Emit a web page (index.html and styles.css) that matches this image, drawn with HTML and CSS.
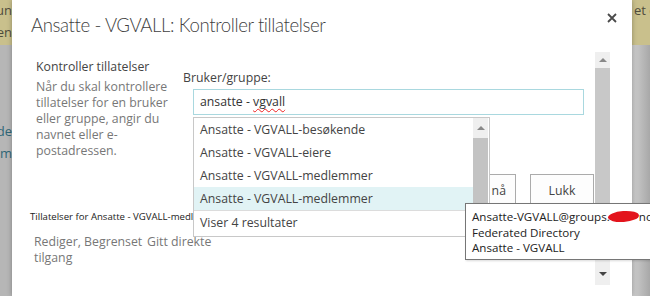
FILE: index.html
```html
<!DOCTYPE html>
<html lang="no">
<head>
    <meta charset="UTF-8">
    <meta name="viewport" content="width=device-width, initial-scale=1.0">
    <title>Ansatte - VGVALL: Kontroller tillatelser</title>
    <link rel="stylesheet" href="styles.css">
</head>
<body>
    <!-- page behind the dialog, dimmed -->
    <div class="backdrop backdrop-left">
        <div class="bg-line bg-first">Kommun</div>
        <div class="bg-line">Eieren</div>
        <div class="bg-line bg-link bg-gap">Medarbeide</div>
        <div class="bg-line bg-link">Komm</div>
    </div>

    <div class="dialog">
        <div class="dialog-header">
            <h1>Ansatte - VGVALL: Kontroller tillatelser</h1>
            <button class="close" type="button" title="Lukk">
                <svg width="10" height="10" viewBox="0 0 10 10">
                    <path d="M1 1 L9 9 M9 1 L1 9" stroke="#4a4a4a" stroke-width="1.8" fill="none"/>
                </svg>
            </button>
        </div>

        <div class="dialog-body">
            <div class="frame">
                <div class="check-row">
                    <div class="section-desc">
                        <h2>Kontroller tillatelser</h2>
                        <p>Når du skal kontrollere tillatelser for en bruker eller gruppe, angir du navnet eller e-postadressen.</p>
                    </div>
                    <div class="section-field">
                        <label for="picker">Bruker/gruppe:</label>
                        <div class="picker">
                            <div class="picker-input" id="picker">ansatte - <span class="misspelled">vgvall</span></div>
                            <div class="suggestions">
                                <div class="suggestion-body">
                                    <ul class="suggestion-list">
                                        <li>Ansatte - VGVALL-besøkende</li>
                                        <li>Ansatte - VGVALL-eiere</li>
                                        <li>Ansatte - VGVALL-medlemmer</li>
                                        <li class="active">Ansatte - VGVALL-medlemmer</li>
                                    </ul>
                                    <div class="mini-scroll">
                                        <div class="mini-up"><span class="arrow-up"></span></div>
                                        <div class="mini-thumb"></div>
                                    </div>
                                </div>
                                <div class="suggestion-footer">Viser 4 resultater</div>
                            </div>
                        </div>
                        <div class="actions">
                            <button type="button" class="btn">Kontroller nå</button>
                            <button type="button" class="btn btn-close">Lukk</button>
                        </div>
                    </div>
                </div>

                <div class="result-title">Tillatelser for Ansatte - VGVALL-medlemmer:</div>
                <table class="result-table">
                    <tr>
                        <td class="col-level">Rediger, Begrenset tilgang</td>
                        <td>Gitt direkte</td>
                    </tr>
                </table>
            </div>

            <div class="scrollbar">
                <div class="scroll-up"><span class="arrow-up"></span></div>
                <div class="scroll-thumb"></div>
                <div class="scroll-track"></div>
                <div class="scroll-down"><span class="arrow-down"></span></div>
            </div>
        </div>

        <div class="tooltip">
            <div>Ansatte-VGVALL@groups.<span class="redact"></span>no</div>
            <div>Federated Directory</div>
            <div>Ansatte - VGVALL</div>
        </div>
    </div>

    <div class="backdrop backdrop-right">
        <div class="bg-line bg-first">et c</div>
    </div>
</body>
</html>
```

FILE: styles.css
```css
* {
    box-sizing: border-box;
}
body {
    margin: 0;
    width: 650px;
    height: 296px;
    overflow: hidden;
    display: flex;
    font-family: "Open Sans", "Noto Sans", sans-serif;
    font-size: 12.3px;
    background: linear-gradient(#c9c08c 0, #c9c08c 45px, #b6b6b6 45px);
}

/* dimmed page behind */
.backdrop {
    display: flex;
    flex-direction: column;
    align-items: flex-end;
    overflow: hidden;
    flex: none;
    font-size: 13px;
    color: #4f4c3c;
}
.backdrop-left {
    width: 12px;
}
.backdrop-right {
    width: 18px;
    align-items: flex-start;
    padding-left: 2px;
    background:
        linear-gradient(#c9c08c, #c9c08c) top / 100% 45px no-repeat,
        linear-gradient(90deg, #cfcfcf, #a8a8a8);
}
.bg-line {
    height: 20px;
    line-height: 20px;
    margin-top: 2px;
    white-space: nowrap;
}
.bg-first {
    margin-top: 0;
}
.bg-link {
    color: #2f6676;
}
.bg-gap {
    margin-top: 79px;
}

/* dialog */
.dialog {
    position: relative;
    width: 620px;
    flex: none;
    background: #fff;
    color: #444;
    box-shadow: 0 0 5px rgba(0,0,0,0.3);
}
.dialog-header {
    height: 52px;
    display: flex;
    justify-content: space-between;
    padding: 10px 15px 0 19px;
}
.dialog-header h1 {
    margin: 0;
    font-family: "Lato", "Open Sans", sans-serif;
    font-size: 18.6px;
    font-weight: 300;
    line-height: 30px;
    letter-spacing: -0.4px;
    color: #3f3f3f;
}
.close {
    margin-top: 3px;
    width: 10px;
    height: 10px;
    padding: 0;
    border: none;
    background: none;
}
.close svg {
    display: block;
}

.dialog-body {
    display: flex;
    height: 233px;
    width: 580px;
    margin-left: 18px;
}
.frame {
    flex: 1;
}
.check-row {
    display: flex;
}
.section-desc {
    width: 153px;
    padding: 7px 0 0 6px;
}
.section-desc h2 {
    margin: 0 0 4px;
    font-size: 12.3px;
    font-weight: 400;
    line-height: 16px;
    color: #444;
}
.section-desc p {
    margin: 0;
    width: 132px;
    line-height: 16px;
    color: #777;
}
.section-field {
    flex: 1;
    padding: 18px 1px 0 0;
}
.section-field label {
    display: block;
    line-height: 16px;
    color: #444;
}
.picker {
    position: relative;
    margin: 3px 0 0 10px;
    width: 391px;
}
.picker-input {
    height: 26px;
    line-height: 24px;
    padding: 0 6px;
    border: 1px solid #a9d8df;
    color: #333;
}
.misspelled {
    text-decoration: underline wavy #e22;
    text-decoration-thickness: 1px;
    text-decoration-skip-ink: none;
    text-underline-offset: 2px;
}

/* autocomplete menu */
.suggestions {
    position: absolute;
    top: 28px;
    left: 0;
    width: 297px;
    background: #fff;
    border: 1px solid #c8c8c8;
    z-index: 2;
}
.suggestion-body {
    display: flex;
    border-bottom: 1px solid #dcdcdc;
}
.suggestion-list {
    flex: 1;
    margin: 0;
    padding: 0;
    list-style: none;
}
.suggestion-list li {
    height: 23px;
    line-height: 23px;
    padding-left: 6px;
    color: #444;
}
.suggestion-list li.active {
    background: #e1f3f5;
}
.mini-scroll {
    width: 15px;
    margin-right: 1px;
    display: flex;
    flex-direction: column;
}
.mini-up {
    height: 20px;
    background: #efefef;
    display: flex;
    align-items: center;
    justify-content: center;
}
.mini-thumb {
    flex: 1;
    background: #c3c3c3;
}
.suggestion-footer {
    height: 25px;
    line-height: 24px;
    padding-left: 6px;
    color: #444;
}

.actions {
    display: flex;
    justify-content: flex-end;
    gap: 14px;
    margin-top: 59px;
}
.btn {
    height: 32px;
    padding: 0 9px;
    border: 1px solid #ababab;
    background: #fdfdfd;
    font-family: inherit;
    font-size: 12.3px;
    color: #444;
}
.btn-close {
    width: 64px;
}

.result-title {
    margin-top: 4px;
    font-size: 9.6px;
    line-height: 14px;
    color: #222;
}
.result-table {
    margin-top: 10px;
    border-collapse: collapse;
    color: #777;
}
.result-table td {
    padding: 0;
    line-height: 16px;
    vertical-align: top;
}
.result-table .col-level {
    width: 117px;
    padding: 0 4px;
}

/* dialog scrollbar */
.scrollbar {
    width: 15px;
    display: flex;
    flex-direction: column;
    background: #efefef;
}
.scroll-up {
    height: 16px;
    display: flex;
    align-items: center;
    justify-content: center;
}
.scroll-thumb {
    height: 190px;
    background: #c8c8c8;
}
.scroll-track {
    flex: 1;
}
.scroll-down {
    height: 23px;
    display: flex;
    align-items: center;
    justify-content: center;
}
.arrow-up {
    border-left: 4px solid transparent;
    border-right: 4px solid transparent;
    border-bottom: 4px solid #888;
}
.arrow-down {
    border-left: 4px solid transparent;
    border-right: 4px solid transparent;
    border-top: 4px solid #444;
}

/* hover tooltip */
.tooltip {
    position: absolute;
    left: 453px;
    top: 203px;
    width: 210px;
    height: 57px;
    padding: 5px 6px;
    background: #fff;
    border: 1px solid #767676;
    box-shadow: 1px 1px 2px rgba(0,0,0,0.15);
    font-size: 11.6px;
    line-height: 15.5px;
    color: #222;
    white-space: nowrap;
    z-index: 3;
}
.redact {
    display: inline-block;
    width: 31px;
    height: 11px;
    margin-left: -2px;
    vertical-align: -1px;
    border-radius: 50%;
    background: #e3141c;
    transform: rotate(-4deg);
}
```
